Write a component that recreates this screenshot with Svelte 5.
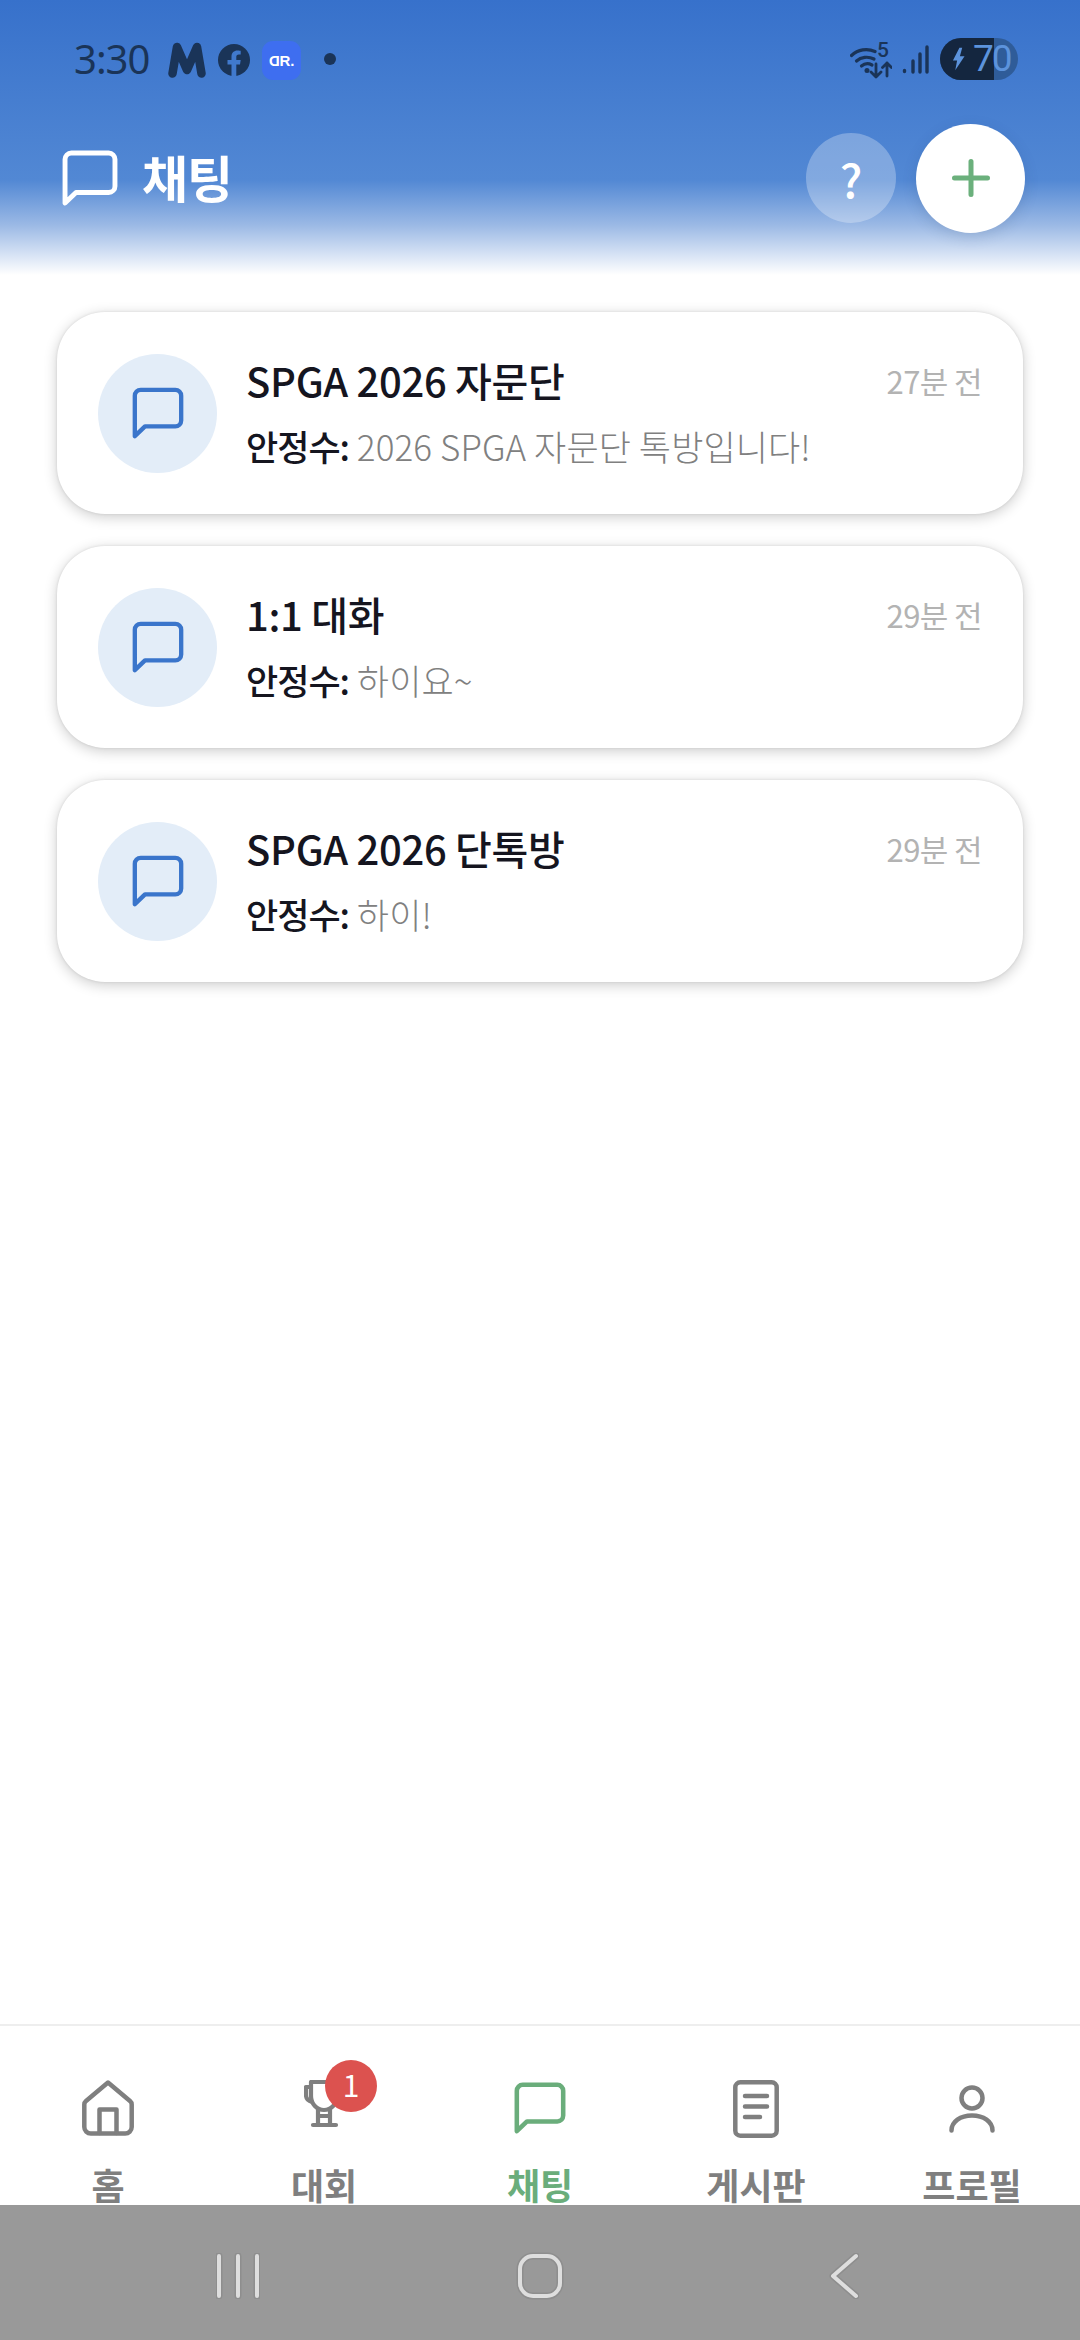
<script>
	const chats = [
		{ title: 'SPGA 2026 자문단', time: '27분 전', sender: '안정수:', text: '2026 SPGA 자문단 톡방입니다!' },
		{ title: '1:1 대화', time: '29분 전', sender: '안정수:', text: '하이요~' },
		{ title: 'SPGA 2026 단톡방', time: '29분 전', sender: '안정수:', text: '하이!' }
	];
</script>

{#snippet bubble(cls)}
	<svg class={cls} viewBox="0 0 24 24" fill="none" stroke="currentColor" stroke-linecap="round" stroke-linejoin="round">
		<path d="M1.3 22.7V4a2.7 2.7 0 0 1 2.7-2.7h16A2.7 2.7 0 0 1 22.7 4v11.5a2.7 2.7 0 0 1-2.7 2.7H6z" />
	</svg>
{/snippet}

<div class="screen">
	<header class="header">
		<div class="status">
			<div class="status-left">
				<span class="clock">3:30</span>
				<svg class="ic-m" viewBox="0 0 38 36" fill="none" stroke="currentColor" stroke-width="8.500" stroke-linecap="round" stroke-linejoin="round">
					<path d="M4.500 31.500 9 5l10 23L29 5l4.500 26.500" />
				</svg>
				<svg class="ic-fb" viewBox="0 0 32 32">
					<circle cx="16" cy="16" r="16" fill="currentColor" />
					<path d="M13.500 32V20.500H9.500V16h4v-3.400c0-4 2.400-6.200 6-6.200 1.700 0 3.200.3 3.200.3v3.900h-1.800c-2 0-2.600 1.200-2.600 2.500V16h4.400l-.7 4.500h-3.700V32z" fill="#4079cd" />
				</svg>
				<span class="dr"><span class="flip">D</span>R.</span>
				<span class="dot"></span>
			</div>
			<div class="status-right">
				<svg class="ic-wifi" viewBox="0 0 42 34" fill="none" stroke="currentColor" stroke-linecap="round">
					<path d="M1.500 9.500C8 3.500 17 2 25 5.500" stroke-width="3.200" />
					<path d="M6.500 15C11 11 18 10 24 13" stroke-width="3.200" />
					<path d="M11.500 20c3-2.500 7-2.800 10.500-1" stroke-width="3.200" />
					<circle cx="17" cy="24.500" r="2.500" fill="currentColor" stroke="none" />
					<path d="M26 18v13m-5-5 5 5 5-5M37 30V17m-4.500 4.500L37 17l4.500 4.500" stroke-width="2.800" stroke-linejoin="round" />
				</svg>
				<span class="five">5</span>
				<svg class="ic-signal" viewBox="0 0 27 29" fill="none" stroke="currentColor" stroke-width="3.400" stroke-linecap="round">
					<path d="M2.500 26.500v-1M11 27V16M18 27V9M25 27V2" />
				</svg>
				<div class="battery">
					<div class="battery-fill"></div>
					<svg class="bolt" viewBox="0 0 14 24"><path d="M8 0 1 13.500h4.500L3.500 24 13.500 9H8.500L11 0z" fill="currentColor" /></svg>
					<span class="level">70</span>
				</div>
			</div>
		</div>
		<div class="title-row">
			<div class="title">
				{@render bubble('ic-title')}
				<h1>채팅</h1>
			</div>
			<div class="actions">
				<button class="help">?</button>
				<button class="add" aria-label="add">
					<svg viewBox="0 0 38 38" stroke="currentColor" stroke-width="5" stroke-linecap="round"><path d="M19 2.500v33M2.500 19h33" /></svg>
				</button>
			</div>
		</div>
	</header>

	<main class="list">
		{#each chats as chat}
			<article class="card">
				<div class="avatar">{@render bubble('ic-card')}</div>
				<div class="body">
					<div class="top">
						<span class="name">{chat.title}</span>
						<span class="time">{chat.time}</span>
					</div>
					<p class="preview"><b>{chat.sender}</b> {chat.text}</p>
				</div>
			</article>
		{/each}
	</main>

	<nav class="tabs">
		<div class="tab">
			<div class="tab-icon">
				<svg class="ic-home" viewBox="0 0 52 56" fill="none" stroke="currentColor" stroke-width="4.500" stroke-linecap="round" stroke-linejoin="round">
					<path d="M26 2.500 48 21q1.700 1.400 1.700 3.500V47a6.500 6.500 0 0 1-6.500 6.500H8.800A6.500 6.500 0 0 1 2.300 47V24.500q0-2.100 1.700-3.500z" />
					<path d="M17.500 53V29.500h17V53" />
				</svg>
			</div>
			<span>홈</span>
		</div>
		<div class="tab">
			<div class="tab-icon">
				<svg class="ic-trophy" viewBox="0 0 40 48" fill="none" stroke="currentColor" stroke-width="4.200" stroke-linecap="round" stroke-linejoin="round">
					<path d="M7 2h26v14c0 8-6 14-13 14S7 24 7 16z" />
					<path d="M7 7H2v8c0 3 2 6 6 7" />
					<path d="M14 30v14M26 30v14M14 36h12M9 45h23" />
				</svg>
				<span class="badge">1</span>
			</div>
			<span>대회</span>
		</div>
		<div class="tab active">
			<div class="tab-icon">{@render bubble('ic-tab')}</div>
			<span>채팅</span>
		</div>
		<div class="tab">
			<div class="tab-icon">
				<svg class="ic-board" viewBox="0 0 46 58" fill="none" stroke="currentColor" stroke-width="4.500" stroke-linecap="round">
					<rect x="2.300" y="2.300" width="41.400" height="53.400" rx="5" />
					<path d="M12 16h22M12 26.500h22M12 37h15" />
				</svg>
			</div>
			<span>게시판</span>
		</div>
		<div class="tab">
			<div class="tab-icon">
				<svg class="ic-user" viewBox="0 0 46 48" fill="none" stroke="currentColor" stroke-width="4.500" stroke-linecap="round">
					<circle cx="23" cy="13" r="10.500" />
					<path d="M2.500 45.500c0-9 9-15 20.500-15s20.500 6 20.500 15" />
				</svg>
			</div>
			<span>프로필</span>
		</div>
	</nav>

	<div class="gesture">
		<svg class="ic-recent" viewBox="0 0 44 46" fill="none" stroke-linecap="round">
			<path class="halo" d="M3 3v40M22 3v40M41 3v40" />
			<path class="line" d="M3 3v40M22 3v40M41 3v40" />
		</svg>
		<svg class="ic-homekey" viewBox="0 0 48 48" fill="none">
			<rect class="halo" x="4" y="4" width="40" height="40" rx="13" />
			<rect class="line" x="4" y="4" width="40" height="40" rx="13" />
		</svg>
		<svg class="ic-back" viewBox="0 0 30 46" fill="none" stroke-linecap="round" stroke-linejoin="round">
			<path class="halo" d="M27 3 4 23l23 20" />
			<path class="line" d="M27 3 4 23l23 20" />
		</svg>
	</div>
</div>

<style>
	:global(body) {
		background: #fff;
	}

	.screen {
		width: 1080px;
		height: 2340px;
		display: flex;
		flex-direction: column;
		overflow: hidden;
		background: #fff;
		font-family: "Noto Sans CJK KR", "Noto Sans", sans-serif;
	}

	.header {
		height: 275px;
		flex: none;
		box-sizing: border-box;
		padding-top: 38px;
		background: linear-gradient(180deg, #3771cb 0, #5288d4 180px, #9bb9e5 225px, #fff 275px);
	}

	.status {
		height: 42px;
		display: flex;
		justify-content: space-between;
		align-items: center;
		padding: 0 62px 0 74px;
		color: #1a3458;
	}

	.status-left,
	.status-right {
		display: flex;
		align-items: center;
	}

	.clock {
		font-family: "Noto Sans", sans-serif;
		font-size: 40px;
		line-height: 42px;
		letter-spacing: -1px;
		width: 94px;
	}

	.ic-m {
		width: 38px;
		height: 36px;
		margin-top: 2px;
	}

	.ic-fb {
		width: 32px;
		height: 32px;
		margin-left: 12px;
		margin-top: 2px;
	}

	.dr {
		width: 39px;
		height: 39px;
		flex: none;
		margin-left: 12px;
		margin-top: 2px;
		border-radius: 11px;
		background: #3e6ef0;
		color: #fff;
		font-family: "Liberation Sans", sans-serif;
		font-weight: 700;
		font-size: 15px;
		display: flex;
		align-items: center;
		justify-content: center;
	}

	.flip {
		display: inline-block;
		transform: scaleX(-1);
	}

	.dot {
		width: 12px;
		height: 12px;
		margin-left: 23px;
		border-radius: 50%;
		background: currentColor;
	}

	.status-right {
		position: relative;
	}

	.ic-wifi {
		width: 42px;
		height: 34px;
		margin-top: 8px;
	}

	.five {
		position: absolute;
		left: 27px;
		top: 1px;
		font-family: Roboto, sans-serif;
		font-size: 21px;
		line-height: 22px;
		font-weight: 500;
	}

	.ic-signal {
		width: 27px;
		height: 29px;
		margin-left: 10px;
	}

	.battery {
		position: relative;
		width: 78px;
		height: 42px;
		margin-left: 11px;
		border-radius: 21px;
		background: #2f5c99;
		display: flex;
		align-items: center;
	}

	.battery-fill {
		position: absolute;
		left: 0;
		top: 0;
		bottom: 0;
		width: 54px;
		border-radius: 21px 0 0 21px;
		background: #14263f;
	}

	.bolt {
		position: relative;
		width: 13px;
		height: 24px;
		margin-left: 12px;
		color: #5c93dc;
	}

	.level {
		position: relative;
		margin-left: 8px;
		font-family: Roboto, sans-serif;
		font-size: 37px;
		line-height: 42px;
		letter-spacing: -2px;
		color: #5c93dc;
	}

	.title-row {
		height: 108px;
		margin-top: 44px;
		padding: 0 55px 0 62px;
		display: flex;
		justify-content: space-between;
		align-items: center;
	}

	.title {
		display: flex;
		align-items: center;
		gap: 24px;
		color: #fff;
	}

	.ic-title {
		width: 56px;
		height: 56px;
		stroke-width: 2.1;
	}

	h1 {
		margin: 0 0 4px;
		font-size: 50px;
		line-height: 56px;
		font-weight: 700;
		letter-spacing: -1px;
	}

	.actions {
		display: flex;
		align-items: center;
		gap: 20px;
	}

	button {
		border: none;
		padding: 0;
		border-radius: 50%;
		display: flex;
		align-items: center;
		justify-content: center;
		font-family: inherit;
	}

	.help {
		width: 90px;
		height: 90px;
		background: rgba(255, 255, 255, 0.28);
		color: #fff;
		font-size: 46px;
		font-weight: 500;
		line-height: 1;
	}

	.add {
		width: 109px;
		height: 109px;
		background: #fff;
		color: #6bb07c;
		box-shadow: 0 4px 14px rgba(40, 70, 120, 0.18);
	}

	.add svg {
		width: 38px;
		height: 38px;
	}

	.list {
		flex: 1;
		padding: 37px 57px 0;
		display: flex;
		flex-direction: column;
		gap: 32px;
	}

	.card {
		height: 202px;
		box-sizing: border-box;
		padding: 0 41px;
		display: flex;
		align-items: center;
		gap: 29px;
		background: #fff;
		border-radius: 48px;
		box-shadow: 0 3px 14px rgba(0, 0, 0, 0.2), 0 0 3px rgba(0, 0, 0, 0.1);
	}

	.avatar {
		width: 119px;
		height: 119px;
		flex: none;
		border-radius: 50%;
		background: #e3edf8;
		color: #3a75cb;
		display: flex;
		align-items: center;
		justify-content: center;
	}

	.ic-card {
		width: 52px;
		height: 52px;
		stroke-width: 2;
	}

	.body {
		flex: 1;
		min-width: 0;
	}

	.top {
		display: flex;
		justify-content: space-between;
		align-items: center;
		height: 50px;
	}

	.name {
		font-size: 40px;
		font-weight: 500;
		letter-spacing: -0.3px;
		color: #15151f;
	}

	.time {
		font-size: 31px;
		letter-spacing: -0.6px;
		color: #b3b3b3;
	}

	.preview {
		margin: 16px 0 0;
		font-size: 35px;
		line-height: 50px;
		font-weight: 300;
		letter-spacing: 0.1px;
		color: #808080;
	}

	.preview b {
		font-weight: 500;
		letter-spacing: -1px;
		color: #15151f;
	}

	.tabs {
		height: 181px;
		flex: none;
		box-sizing: border-box;
		border-top: 2px solid #eeeeee;
		padding-top: 54px;
		display: grid;
		grid-template-columns: repeat(5, 1fr);
		background: #fff;
	}

	.tab {
		display: flex;
		flex-direction: column;
		align-items: center;
		color: #7f7f7f;
		font-size: 36px;
		line-height: 44px;
		font-weight: 700;
	}

	.tab.active {
		color: #6aad7b;
	}

	.tab-icon {
		position: relative;
		height: 56px;
		margin-bottom: 26px;
		display: flex;
		justify-content: center;
	}

	.ic-home {
		width: 52px;
		height: 56px;
	}

	.ic-trophy {
		width: 40px;
		height: 48px;
	}

	.ic-tab {
		width: 52px;
		height: 52px;
		margin-top: 2px;
		stroke-width: 2.1;
	}

	.ic-board {
		width: 46px;
		height: 58px;
	}

	.ic-user {
		width: 46px;
		height: 48px;
		margin-top: 5px;
	}

	.badge {
		position: absolute;
		left: 21px;
		top: -20px;
		width: 52px;
		height: 52px;
		border-radius: 50%;
		background: #dc524f;
		color: #fff;
		font-size: 30px;
		line-height: 48px;
		font-weight: 400;
		text-align: center;
	}

	.gesture {
		height: 135px;
		flex: none;
		box-sizing: border-box;
		padding: 6px 5px 0 0;
		background: #999999;
		display: flex;
		justify-content: center;
		align-items: center;
	}

	.ic-recent {
		width: 44px;
		height: 46px;
	}

	.ic-homekey {
		width: 48px;
		height: 48px;
		margin: 0 265px 0 256px;
	}

	.ic-back {
		width: 30px;
		height: 46px;
	}

	.halo {
		stroke: #8e8e8e;
		stroke-width: 7;
	}

	.line {
		stroke: #dedede;
		stroke-width: 4;
	}
</style>
